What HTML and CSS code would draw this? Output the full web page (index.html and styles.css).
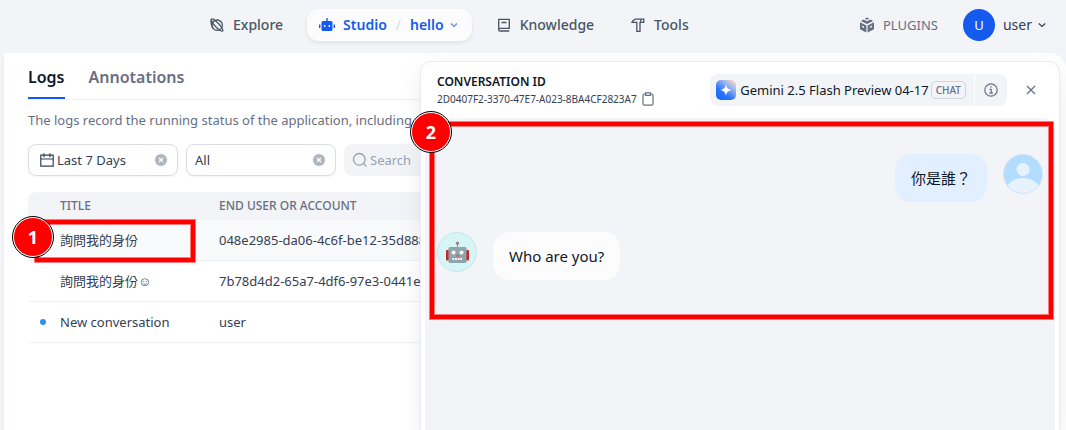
FILE: index.html
```html
<!DOCTYPE html>
<html lang="en">
<head>
<meta charset="utf-8">
<title>Logs</title>
<link rel="stylesheet" href="styles.css">
</head>
<body>
<header class="topbar">
  <nav class="nav">
    <a class="nav-item" href="#explore">
      <svg class="icon" width="16" height="16" viewBox="-1 -1 16 16" fill="none" stroke="currentColor" stroke-width="1.300"><circle cx="7.200" cy="7.200" r="5.200"/><path d="M3.400 10.800C1.300 8.600.6 2.900 1.100 1.500 2.300.6 5 2.200 8.200 5.300c3.200 3.200 5.300 6.900 4.600 7.600-.7.600-3.300-.6-5.800-2.800C4.500 8 2.500 5 1.300 2.500M1 1.200h3.200"/></svg>
      Explore
    </a>
    <div class="nav-item nav-active">
      <a class="nav-link" href="#studio">
        <svg class="icon" width="16" height="16" viewBox="0 0 16 16"><path fill="currentColor" d="M7.300 1h1.400v3H12a1.500 1.500 0 0 1 1.500 1.500v7A1.500 1.500 0 0 1 12 14H4a1.500 1.500 0 0 1-1.500-1.500v-7A1.500 1.500 0 0 1 4 4h3.300zM0 7.500h1.400v3.500H0zM14.600 7.500H16v3.500h-1.400z"/><circle cx="5.700" cy="9" r=".9" fill="#fff"/><circle cx="10.300" cy="9" r=".9" fill="#fff"/></svg>
        Studio
      </a>
      <span class="slash">/</span>
      <button class="app-switch" type="button">hello
        <svg class="icon chev" width="8" height="8" viewBox="0 0 8 8" fill="none" stroke="currentColor" stroke-width="1.200"><path d="M1 2.500 4 5.500 7 2.500"/></svg>
      </button>
    </div>
    <a class="nav-item" href="#knowledge">
      <svg class="icon" width="16" height="16" viewBox="-1 -1 16 16" fill="none" stroke="currentColor" stroke-width="1.300"><path d="M1.700 11.700V1.300h10.600v9H3a1.300 1.300 0 0 0 0 2.700h9.300M4.500 4.500h5"/></svg>
      Knowledge
    </a>
    <a class="nav-item" href="#tools">
      <svg class="icon" width="16" height="16" viewBox="-1 -1 16 16" fill="none" stroke="currentColor" stroke-width="1.300"><path d="M1 4.400C2 2.300 3.500 1.100 5.200 1.100h7.600v3.300H9v8.900H5.800V4.400zM9.800 1.100v3.300"/></svg>
      Tools
    </a>
  </nav>
  <div class="account">
    <a class="plugins" href="#plugins">
      <svg class="icon" width="16" height="16" viewBox="0 0 16 16" fill="currentColor"><path d="M8 .6 10.200 1.700 8 2.800 5.800 1.700zM4.500 2.600 8 4.300l3.500-1.700 2.600 1.300L8 6.900 1.900 3.900zM1 5.300l6.400 3.200v6.900L1 12.200zM15 5.300 8.600 8.500v6.900L15 12.200z"/><path d="M3 8.500l2 1v1.600l-2-1zM11 9.500l2-1v1.600l-2 1z" fill="#f2f4f7"/></svg>
      PLUGINS
    </a>
    <button class="user" type="button">
      <span class="user-avatar">U</span>
      <span class="user-name">user
      <svg class="icon" width="8" height="8" viewBox="0 0 8 8" fill="none" stroke="currentColor" stroke-width="1.200"><path d="M.8 2.500 4 5.500 7.200 2.500"/></svg></span>
    </button>
  </div>
</header>

<main class="page">
  <section class="logs">
    <nav class="tabs">
      <a class="tab tab-active" href="#logs">Logs</a>
      <a class="tab" href="#annotations">Annotations</a>
    </nav>
    <p class="intro">The logs record the running status of the application, including</p>
    <div class="filters">
      <div class="filter">
        <svg class="icon" width="14" height="14" viewBox="0 0 14 14" fill="none" stroke="#354052" stroke-width="1.200"><path d="M.8 2.200h12.400v11H.8zM.8 6h12.400M4 .3v3.900M10 .3v3.900"/></svg>
        <select class="filter-select" aria-label="Period"><option>Last 7 Days</option></select>
        <button class="clear" type="button" aria-label="Clear period"><svg width="12" height="12" viewBox="0 0 12 12"><circle cx="6" cy="6" r="6" fill="#b0b4bc"/><path d="M4 4l4 4M8 4l-4 4" stroke="#fff" stroke-width="1.300"/></svg></button>
      </div>
      <div class="filter">
        <select class="filter-select filter-plain" aria-label="Annotation status"><option>All</option></select>
        <button class="clear" type="button" aria-label="Clear status"><svg width="12" height="12" viewBox="0 0 12 12"><circle cx="6" cy="6" r="6" fill="#b0b4bc"/><path d="M4 4l4 4M8 4l-4 4" stroke="#fff" stroke-width="1.300"/></svg></button>
      </div>
      <label class="search">
        <svg class="icon" width="16" height="16" viewBox="0 0 16 16" fill="none" stroke="#98a2b2" stroke-width="1.300"><circle cx="7.300" cy="7.300" r="5.800"/><path d="M11.600 11.600 14.600 14.600"/></svg>
        <input class="search-input" type="text" placeholder="Search" aria-label="Search">
      </label>
    </div>
    <table class="table">
      <thead>
        <tr><th class="col-dot"></th><th class="col-title">TITLE</th><th>END USER OR ACCOUNT</th></tr>
      </thead>
      <tbody>
        <tr class="row-selected"><td></td><td>詢問我的身份</td><td>048e2985-da06-4c6f-be12-35d888</td></tr>
        <tr><td></td><td>詢問我的身份☺</td><td>7b78d4d2-65a7-4df6-97e3-0441e</td></tr>
        <tr><td><span class="unread"></span></td><td>New conversation</td><td>user</td></tr>
      </tbody>
    </table>
  </section>

  <aside class="drawer">
    <header class="drawer-head">
      <div class="conversation">
        <h2 class="conversation-label">CONVERSATION ID</h2>
        <div class="conversation-id">2D0407F2-3370-47E7-A023-8BA4CF2823A7
          <button class="plain" type="button" aria-label="Copy"><svg width="12" height="14" viewBox="0 0 12 14" fill="none" stroke="#676f83" stroke-width="1.200"><rect x="1" y="2" width="10" height="11.200" rx="1.500"/><path d="M3.500.8h5v2.600h-5z" fill="#fff"/></svg></button>
        </div>
      </div>
      <div class="model">
        <div class="model-name">
          <svg class="icon model-logo" width="20" height="20" viewBox="0 0 20 20">
            <defs>
              <linearGradient id="tile" x1="0.100" y1="1" x2="0.900" y2="0"><stop offset="0" stop-color="#1668ff"/><stop offset=".35" stop-color="#2b74fb"/><stop offset=".75" stop-color="#a8bcee"/><stop offset="1" stop-color="#ffd9b8"/></linearGradient>
            </defs>
            <rect width="20" height="20" rx="5" fill="url(#tile)"/>
            <path d="M10 4c.7 4 2 5.300 6 6-4 .7-5.300 2-6 6-.7-4-2-5.300-6-6 4-.7 5.300-2 6-6z" fill="#fff"/>
          </svg>
          <span class="model-text">Gemini 2.5 Flash Preview 04-17</span>
          <span class="chip">CHAT</span>
        </div>
        <button class="info" type="button" aria-label="Details"><svg width="14" height="14" viewBox="0 0 14 14" fill="none" stroke="#676f83" stroke-width="1.200"><circle cx="7" cy="7" r="6.200"/><path d="M5.500 6.300h1.700v4M5.200 10.200h3.800M6.300 3.900h1.400"/></svg></button>
      </div>
      <button class="plain close" type="button" aria-label="Close"><svg width="10" height="10" viewBox="0 0 10 10" fill="none" stroke="#676f83" stroke-width="1.300"><path d="M1 1l8 8M9 1 1 9"/></svg></button>
    </header>
    <div class="chat">
      <div class="message message-user">
        <div class="bubble bubble-user">你是誰？</div>
        <svg class="icon" width="40" height="40" viewBox="0 0 40 40"><defs><clipPath id="round"><circle cx="20" cy="20" r="19.500"/></clipPath></defs><g clip-path="url(#round)"><path fill="#b2ddff" d="M0 0h40v40H0z"/><circle cx="20" cy="15.500" r="6.500" fill="#e6f3ff"/><ellipse cx="20" cy="37" rx="17" ry="13" fill="#e6f3ff"/></g><circle cx="20" cy="20" r="19.500" fill="none" stroke="#d9e2ec"/></svg>
      </div>
      <div class="message">
        <svg class="icon" width="40" height="40" viewBox="0 0 40 40"><circle cx="20" cy="20" r="19.500" fill="#d5f5f6" stroke="#c6e6e8"/><path d="M20.500 11v5" stroke="#78909c" stroke-width="1"/><circle cx="20.500" cy="11.200" r="1.600" fill="#a07880"/><rect x="9" y="18" width="3" height="10.500" rx="1" fill="#c62828"/><rect x="29" y="18" width="3" height="10.500" rx="1" fill="#c62828"/><rect x="11.500" y="15" width="18" height="16" rx="1.500" fill="#8fa3ad"/><circle cx="16.500" cy="20.500" r="2" fill="#fff"/><circle cx="24.500" cy="20.500" r="2" fill="#fff"/><path d="M20.500 22.300l1.400 2.200h-2.800z" fill="#e53935"/><path d="M15.500 27h10" stroke="#fff" stroke-width="2" stroke-dasharray="1.700 .9"/></svg>
        <div class="bubble">Who are you?</div>
      </div>
    </div>
  </aside>
</main>

<div class="callout callout-row"><span class="callout-badge">1</span></div>
<div class="callout callout-chat"><span class="callout-badge">2</span></div>
</body>
</html>
```
FILE: styles.css
```css
* {
  box-sizing: border-box;
}

html,
body {
  height: 100%;
}

body {
  margin: 0;
  display: flex;
  flex-direction: column;
  position: relative;
  overflow: hidden;
  background: #f2f4f7;
  color: #354052;
  font: 13px/20px "Noto Sans", "Noto Sans CJK TC", sans-serif;
}

a {
  color: inherit;
  text-decoration: none;
}

button {
  padding: 0;
  border: 0;
  background: none;
  color: inherit;
  font: inherit;
}

svg {
  display: block;
}

.icon {
  flex: none;
}

.topbar {
  flex: none;
  display: flex;
  justify-content: space-between;
  align-items: center;
  height: 53px;
  padding: 0 20px 4px 197px;
}

.nav {
  display: flex;
  gap: 12px;
  font-size: 14px;
  font-weight: 500;
  color: #495464;
}

.nav-item {
  display: flex;
  align-items: center;
  gap: 8px;
  height: 32px;
  padding: 0 12px;
}

.nav-active {
  gap: 9px;
  padding-right: 14px;
  border-radius: 12px;
  background: #fcfcfd;
  box-shadow: 0 2px 4px rgba(16, 24, 40, 0.08);
  color: #155aef;
  font-weight: 600;
}

.nav-link,
.app-switch {
  display: flex;
  align-items: center;
  gap: 8px;
}

.app-switch {
  gap: 6px;
}

.slash {
  color: #d9dce3;
  font-weight: 400;
}

.chev {
  opacity: 0.7;
}

.account,
.plugins,
.user,
.user-name {
  display: flex;
  align-items: center;
}

.account {
  gap: 25px;
}

.plugins {
  gap: 8px;
  color: #676f83;
}

.user {
  gap: 8px;
  font-size: 14px;
}

.user-name {
  gap: 6px;
}

.user-avatar {
  width: 32px;
  border-radius: 50%;
  background: #155aef;
  color: #fff;
  font-size: 13px;
  line-height: 32px;
}

.page {
  flex: 1;
  min-height: 0;
  position: relative;
  margin-left: 3px;
  border-left: 1px solid #eeeff2;
  border-top-right-radius: 16px;
  background: #fff;
}

.logs {
  padding: 8px 24px 0;
}

.tabs {
  display: flex;
  gap: 24px;
  border-bottom: 1px solid #f0f1f4;
  font-size: 16px;
  font-weight: 600;
  color: #676f83;
}

.tab {
  padding: 4px 0 8px;
  line-height: 24px;
  border-bottom: 2px solid transparent;
}

.tab-active {
  border-bottom-color: #155aef;
  color: #101828;
}

.intro {
  margin: 10px 0 14px;
  color: #676f83;
}

.filters {
  display: flex;
  gap: 8px;
  margin-bottom: 16px;
}

.filter {
  flex: none;
  display: flex;
  align-items: center;
  width: 150px;
  height: 32px;
  padding: 0 10px 0 11px;
  border: 1px solid #d9dce2;
  border-radius: 8px;
  box-shadow: 0 1px 2px rgba(16, 24, 40, 0.05);
}

.filter-select {
  flex: 1;
  min-width: 0;
  appearance: none;
  padding: 0 0 0 3px;
  border: 0;
  background: none;
  color: #354052;
  font: inherit;
}

.filter-plain {
  margin-left: -6px;
}

.search {
  flex: 1;
  display: flex;
  align-items: center;
  gap: 2px;
  padding: 0 8px;
  border-radius: 8px;
  background: #f2f4f7;
}

.search-input {
  flex: 1;
  min-width: 0;
  padding: 0;
  border: 0;
  background: none;
  font: inherit;
}

.search-input::placeholder {
  color: #98a2b2;
}

.table {
  width: 100%;
  border-collapse: separate;
  border-spacing: 0;
  table-layout: fixed;
  text-align: left;
}

.table th {
  height: 28px;
  padding: 0;
  background: #f2f4f7;
  color: #676f83;
  font-size: 12px;
  font-weight: 500;
}

.table th:first-child {
  border-radius: 8px 0 0 0;
}

.table td {
  height: 41px;
  padding: 0;
  border-bottom: 1px solid #f0f1f4;
}

.table .col-dot {
  width: 32px;
}

.table .col-title {
  width: 159px;
}

.row-selected td {
  background: #f9fafb;
}

.unread {
  display: block;
  width: 6px;
  height: 6px;
  margin-left: 12px;
  border-radius: 50%;
  background: #2e90fa;
}

.drawer {
  position: absolute;
  inset: 8px 6px 0 416px;
  display: flex;
  flex-direction: column;
  padding: 0 4px;
  border: 1px solid #e9ebf0;
  border-bottom: 0;
  border-radius: 12px 12px 0 0;
  background: #fff;
  box-shadow: 0 8px 24px rgba(16, 24, 40, 0.08);
}

.drawer-head {
  display: flex;
  align-items: center;
  height: 56px;
  padding: 0 19px 0 12px;
}

.conversation {
  flex: 1;
}

.conversation-label {
  margin: 0;
  color: #101828;
  font-size: 12px;
  font-weight: 600;
  line-height: 18px;
}

.conversation-id {
  display: flex;
  gap: 5px;
  align-items: center;
  font-size: 10px;
  line-height: 16px;
}

.model {
  display: flex;
  gap: 1px;
}

.model-name,
.info {
  display: flex;
  align-items: center;
  height: 32px;
  background: #f2f4f7;
}

.model-name {
  gap: 2px;
  padding: 0 8px 0 6px;
  border-radius: 8px 0 0 8px;
  color: #101828;
}

.model-logo {
  margin-right: 2px;
}

.chip {
  padding: 0 4px;
  border: 1px solid #d0d4dc;
  border-radius: 5px;
  color: #676f83;
  font-size: 10px;
  font-weight: 500;
  line-height: 16px;
}

.info {
  padding: 0 9px;
  border-radius: 0 8px 8px 0;
}

.close {
  margin-left: 19px;
}

.chat {
  flex: 1;
  display: flex;
  flex-direction: column;
  gap: 30px;
  padding: 36px 12px;
  border-radius: 12px 12px 0 0;
  background: #f2f4f7;
}

.message {
  display: flex;
  align-items: flex-start;
  gap: 16px;
}

.message-user {
  justify-content: flex-end;
}

.bubble {
  padding: 12px 16px;
  border-radius: 16px;
  background: #fcfcfd;
  color: #101828;
  font-size: 15px;
  line-height: 24px;
}

.bubble-user {
  background: #e1effe;
}

.callout {
  position: absolute;
  border: 4px solid #f00;
  box-shadow: 0 0 0 1px rgba(255, 0, 0, 0.5), inset 0 0 0 1px rgba(255, 0, 0, 0.5);
  pointer-events: none;
}

.callout-row {
  top: 220px;
  left: 35px;
  width: 160px;
  height: 42px;
}

.callout-chat {
  top: 122px;
  left: 430px;
  right: 13px;
  height: 197px;
}

.callout-badge {
  position: absolute;
  width: 40px;
  height: 40px;
  border: 1px solid #fff;
  border-radius: 50%;
  outline: 1px solid #000;
  background: #f00;
  color: #fff;
  font-size: 18px;
  font-weight: 700;
  line-height: 38px;
  text-align: center;
}

.callout-row .callout-badge {
  top: -7px;
  left: -26px;
}

.callout-chat .callout-badge {
  top: -14px;
  left: -23px;
}
```
